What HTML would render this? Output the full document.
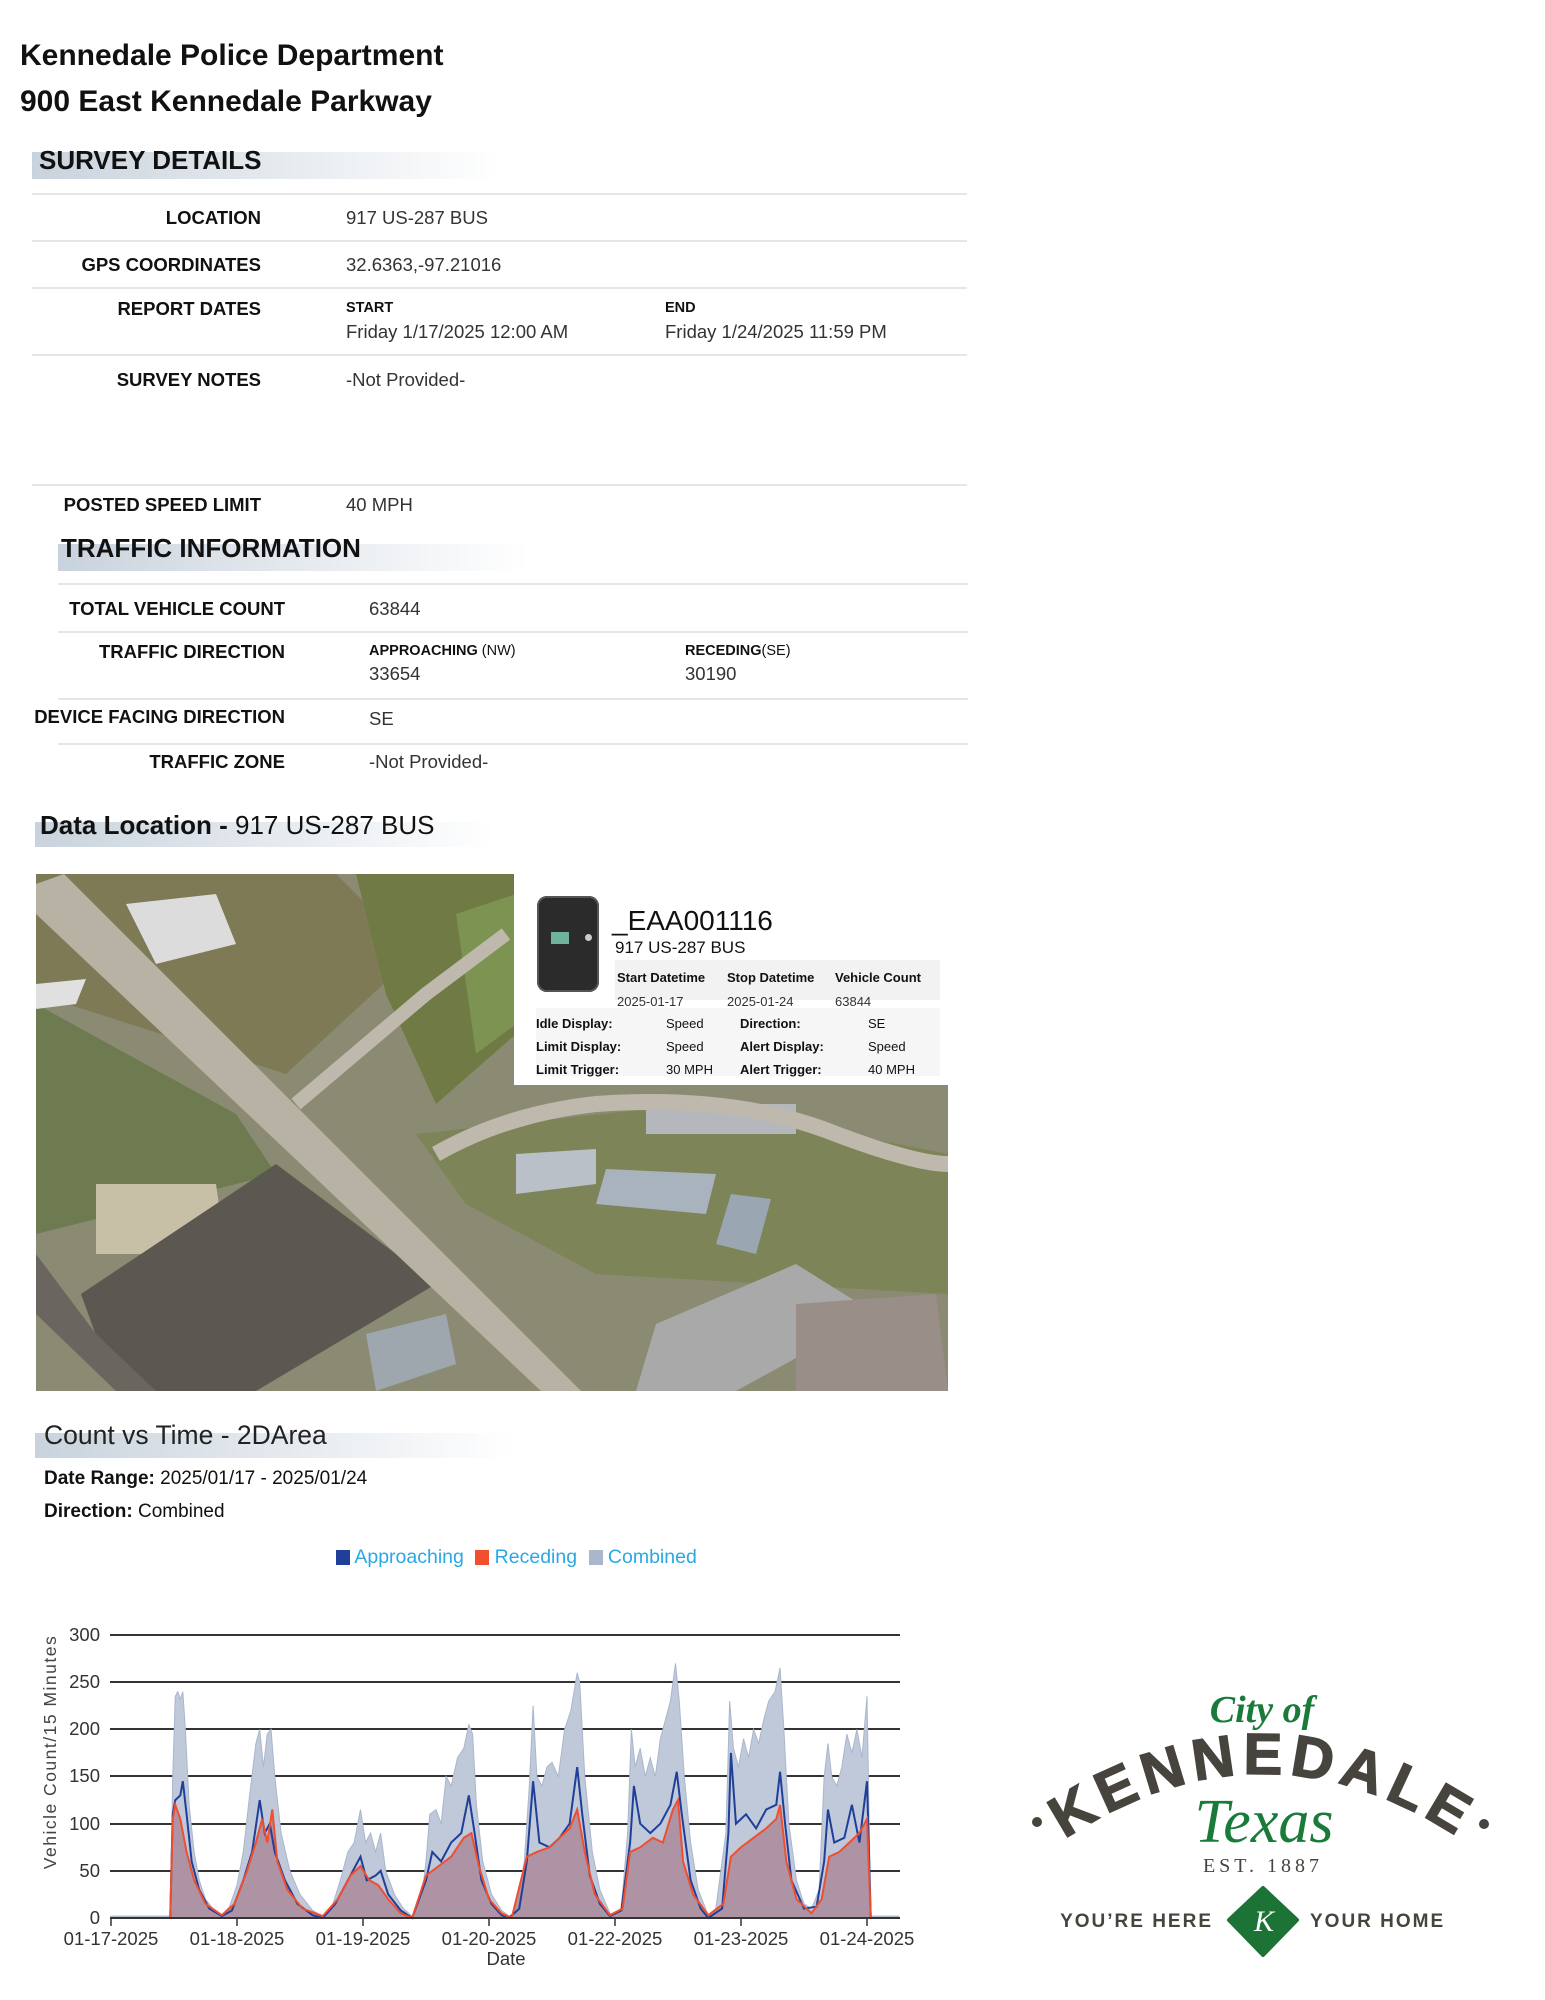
<!DOCTYPE html>
<html><head><meta charset="utf-8"><style>
*{margin:0;padding:0;box-sizing:border-box}
body{width:1545px;height:2000px;background:#fff;position:relative;overflow:hidden;font-family:"Liberation Sans",Arial,sans-serif;color:#111}
.t{position:absolute;white-space:nowrap;line-height:20px}
.h{font-size:30px;font-weight:bold;line-height:34px}
.lab{font-size:18.5px;font-weight:bold;color:#111;text-align:right}
.val{font-size:18.5px;color:#333}
.sm{font-size:14.5px;font-weight:bold;color:#111}
.hr{position:absolute;height:2px;background:#e6e6e6}
.band{position:absolute;background:linear-gradient(to right,#c9d3dd 0%,#e4e9ee 50%,#fff 100%)}
.sec{font-size:26px;font-weight:bold;line-height:28px}
.pp{font-size:13px;line-height:16px;color:#111}
</style></head><body>

<div class="t h" style="left:20px;top:39px">Kennedale Police Department</div>
<div class="t h" style="left:20px;top:85px">900 East Kennedale Parkway</div>

<div class="band" style="left:32px;top:152px;width:470px;height:27px"></div>
<div class="t sec" style="left:39px;top:146px">SURVEY DETAILS</div>

<div class="hr" style="left:32px;top:193px;width:935px"></div>
<div class="t lab" style="right:1284px;top:208px">LOCATION</div>
<div class="t val" style="left:346px;top:208px">917 US-287 BUS</div>
<div class="hr" style="left:32px;top:240px;width:935px"></div>
<div class="t lab" style="right:1284px;top:255px">GPS COORDINATES</div>
<div class="t val" style="left:346px;top:255px">32.6363,-97.21016</div>
<div class="hr" style="left:32px;top:287px;width:935px"></div>
<div class="t lab" style="right:1284px;top:299px">REPORT DATES</div>
<div class="t sm" style="left:346px;top:298px">START</div>
<div class="t val" style="left:346px;top:322px">Friday 1/17/2025 12:00 AM</div>
<div class="t sm" style="left:665px;top:298px">END</div>
<div class="t val" style="left:665px;top:322px">Friday 1/24/2025 11:59 PM</div>
<div class="hr" style="left:32px;top:354px;width:935px"></div>
<div class="t lab" style="right:1284px;top:370px">SURVEY NOTES</div>
<div class="t val" style="left:346px;top:370px">-Not Provided-</div>
<div class="hr" style="left:32px;top:484px;width:935px"></div>
<div class="t lab" style="right:1284px;top:495px">POSTED SPEED LIMIT</div>
<div class="t val" style="left:346px;top:495px">40 MPH</div>

<div class="band" style="left:58px;top:544px;width:470px;height:27px"></div>
<div class="t sec" style="left:61px;top:534px">TRAFFIC INFORMATION</div>

<div class="hr" style="left:58px;top:583px;width:910px"></div>
<div class="t lab" style="right:1260px;top:599px">TOTAL VEHICLE COUNT</div>
<div class="t val" style="left:369px;top:599px">63844</div>
<div class="hr" style="left:58px;top:631px;width:910px"></div>
<div class="t lab" style="right:1260px;top:642px">TRAFFIC DIRECTION</div>
<div class="t sm" style="left:369px;top:641px">APPROACHING <span style="font-weight:normal">(NW)</span></div>
<div class="t val" style="left:369px;top:664px">33654</div>
<div class="t sm" style="left:685px;top:641px">RECEDING<span style="font-weight:normal">(SE)</span></div>
<div class="t val" style="left:685px;top:664px">30190</div>
<div class="hr" style="left:58px;top:698px;width:910px"></div>
<div class="t lab" style="right:1260px;top:707px">DEVICE FACING DIRECTION</div>
<div class="t val" style="left:369px;top:709px">SE</div>
<div class="hr" style="left:58px;top:743px;width:910px"></div>
<div class="t lab" style="right:1260px;top:752px">TRAFFIC ZONE</div>
<div class="t val" style="left:369px;top:752px">-Not Provided-</div>

<div class="band" style="left:35px;top:822px;width:460px;height:25px"></div>
<div class="t" style="left:40px;top:810px;font-size:26px;line-height:30px"><b>Data Location - </b>917 US-287 BUS</div>

<!-- Map -->
<svg style="position:absolute;left:36px;top:874px" width="912" height="517" viewBox="0 0 912 517">
<rect width="912" height="517" fill="#8b8a73"/>
<polygon points="0,0 300,0 380,80 250,200 0,120" fill="#7d7a55"/>
<polygon points="320,0 480,0 480,160 400,230 350,120" fill="#6f7a45"/>
<polygon points="420,40 480,20 480,150 440,180" fill="#7c9352"/>
<polygon points="0,130 200,240 240,300 0,360" fill="#6e7a50"/>
<polygon points="60,310 180,310 190,380 60,380" fill="#c8bfa7"/>
<polygon points="45,420 240,290 400,410 220,517 80,517" fill="#5b5751"/>
<polygon points="380,260 660,230 912,280 912,420 560,400 430,330" fill="#7d8458"/>
<polygon points="480,280 560,275 560,310 480,320" fill="#b9c0c8"/>
<polygon points="570,295 680,300 670,340 560,330" fill="#a9b3be"/>
<polygon points="695,320 735,325 720,380 680,370" fill="#9aa6b2"/>
<polygon points="610,230 760,230 760,260 610,260" fill="#b4b7bb"/>
<polygon points="620,450 760,390 840,440 700,517 600,517" fill="#a9a9a9"/>
<polygon points="760,430 900,420 912,517 760,517" fill="#9a8e88"/>
<polygon points="0,380 60,460 120,517 80,517 0,440" fill="#6b6560"/>
<polygon points="90,30 180,20 200,70 120,90" fill="#dcdcdc"/>
<polygon points="0,110 50,105 40,130 0,135" fill="#e0e0e0"/>
<polygon points="330,460 410,440 420,490 340,517" fill="#9ea6ae"/>
<polygon points="0,10 28,0 545,517 505,517 0,40" fill="#b8b2a5"/>
<path d="M400,280 Q470,240 560,230 Q700,220 800,260 Q880,290 912,290" stroke="#bfb9ad" stroke-width="16" fill="none"/>
<path d="M260,230 L390,120 L470,60" stroke="#bfb9ad" stroke-width="14" fill="none"/>
</svg>
<!-- popup -->
<div style="position:absolute;left:514px;top:874px;width:434px;height:211px;background:#fff"></div>
<div style="position:absolute;left:537px;top:896px;width:62px;height:96px;background:#2b2b2b;border-radius:10px;box-shadow:0 0 0 2px #555 inset"></div>
<div style="position:absolute;left:551px;top:932px;width:18px;height:12px;background:#6fb39a"></div>
<div style="position:absolute;left:585px;top:934px;width:7px;height:7px;background:#ccc;border-radius:50%"></div>
<div class="t" style="left:612px;top:906px;font-size:28px;line-height:30px">_EAA001116</div>
<div class="t" style="left:615px;top:938px;font-size:17px">917 US-287 BUS</div>
<div style="position:absolute;left:615px;top:960px;width:325px;height:40px;background:#f2f2f2"></div>
<div class="t pp" style="left:617px;top:970px;font-weight:bold">Start Datetime</div>
<div class="t pp" style="left:727px;top:970px;font-weight:bold">Stop Datetime</div>
<div class="t pp" style="left:835px;top:970px;font-weight:bold">Vehicle Count</div>
<div class="t pp" style="left:617px;top:994px;color:#333">2025-01-17</div>
<div class="t pp" style="left:727px;top:994px;color:#333">2025-01-24</div>
<div class="t pp" style="left:835px;top:994px;color:#333">63844</div>
<div style="position:absolute;left:536px;top:1008px;width:404px;height:68px;background:#f6f6f6"></div>
<div class="t pp" style="left:536px;top:1016px;font-weight:bold">Idle Display:</div>
<div class="t pp" style="left:666px;top:1016px">Speed</div>
<div class="t pp" style="left:740px;top:1016px;font-weight:bold">Direction:</div>
<div class="t pp" style="left:868px;top:1016px">SE</div>
<div class="t pp" style="left:536px;top:1039px;font-weight:bold">Limit Display:</div>
<div class="t pp" style="left:666px;top:1039px">Speed</div>
<div class="t pp" style="left:740px;top:1039px;font-weight:bold">Alert Display:</div>
<div class="t pp" style="left:868px;top:1039px">Speed</div>
<div class="t pp" style="left:536px;top:1062px;font-weight:bold">Limit Trigger:</div>
<div class="t pp" style="left:666px;top:1062px">30 MPH</div>
<div class="t pp" style="left:740px;top:1062px;font-weight:bold">Alert Trigger:</div>
<div class="t pp" style="left:868px;top:1062px">40 MPH</div>

<div class="band" style="left:35px;top:1433px;width:480px;height:25px"></div>
<div class="t" style="left:44px;top:1420px;font-size:26.5px;line-height:30px;color:#222">Count vs Time - 2DArea</div>
<div class="t" style="left:44px;top:1469px;font-size:19px"><b>Date Range:</b> 2025/01/17 - 2025/01/24</div>
<div class="t" style="left:44px;top:1502px;font-size:19px"><b>Direction:</b> Combined</div>

<div class="t" style="left:336px;top:1547px;font-size:19.5px;color:#2aa8e4">
<span style="display:inline-block;width:14px;height:15px;background:#1f3f99;vertical-align:-2px"></span> Approaching
<span style="display:inline-block;width:14px;height:15px;background:#f04e2f;vertical-align:-2px;margin-left:6px"></span> Receding
<span style="display:inline-block;width:14px;height:15px;background:#aab6cc;vertical-align:-2px;margin-left:6px"></span> Combined</div>

<!-- chart -->
<svg style="position:absolute;left:0;top:1600px" width="960" height="380" viewBox="0 1600 960 380">
<g stroke="#333" stroke-width="2">
<line x1="110" y1="1635" x2="900" y2="1635"/>
<line x1="110" y1="1682" x2="900" y2="1682"/>
<line x1="110" y1="1729" x2="900" y2="1729"/>
<line x1="110" y1="1776" x2="900" y2="1776"/>
<line x1="110" y1="1824" x2="900" y2="1824"/>
<line x1="110" y1="1871" x2="900" y2="1871"/>
</g>
<g transform="translate(111,1918) scale(126,-0.9433)">
<path fill="#bfc9da" stroke="#aab6cc" stroke-width="1" vector-effect="non-scaling-stroke" d="M0,0 L0.47,0 L0.49,150 L0.51,235 L0.53,240 L0.55,232 L0.57,240 L0.59,200 L0.62,120 L0.66,70 L0.70,40 L0.75,20 L0.82,8 L0.88,3 L0.94,12 L1.0,35 L1.05,70 L1.1,130 L1.15,185 L1.18,200 L1.21,160 L1.24,195 L1.27,200 L1.30,150 L1.35,90 L1.42,50 L1.5,25 L1.6,8 L1.68,2 L1.75,10 L1.82,40 L1.88,70 L1.93,80 L1.98,115 L2.02,80 L2.06,90 L2.10,70 L2.14,90 L2.18,50 L2.25,25 L2.32,10 L2.39,2 L2.45,5 L2.5,60 L2.53,110 L2.58,115 L2.62,100 L2.66,150 L2.70,140 L2.75,170 L2.80,180 L2.84,205 L2.87,195 L2.9,120 L2.95,60 L3.02,25 L3.1,8 L3.16,2 L3.22,8 L3.28,60 L3.32,140 L3.35,225 L3.38,150 L3.42,140 L3.46,160 L3.5,165 L3.55,150 L3.6,200 L3.65,220 L3.70,260 L3.72,250 L3.76,150 L3.82,70 L3.88,30 L3.96,5 L4.0,2 L4.05,10 L4.1,90 L4.13,200 L4.16,160 L4.2,180 L4.24,150 L4.28,170 L4.32,150 L4.36,190 L4.40,210 L4.44,230 L4.48,270 L4.51,230 L4.55,150 L4.6,80 L4.66,30 L4.74,3 L4.8,10 L4.88,90 L4.91,230 L4.94,180 L4.98,160 L5.02,190 L5.06,170 L5.1,200 L5.14,185 L5.18,210 L5.22,230 L5.27,240 L5.31,265 L5.34,200 L5.38,100 L5.44,40 L5.5,15 L5.56,10 L5.62,30 L5.66,150 L5.69,185 L5.72,150 L5.76,140 L5.8,160 L5.84,195 L5.88,175 L5.92,200 L5.96,170 L6.0,235 L6.03,0 L6.25,0 L6.25,2 L0,2 Z"/>
<path fill="#ad93a3" d="M0.47,0 L0.49,105 L0.51,120 L0.55,105 L0.6,70 L0.66,40 L0.75,15 L0.88,3 L0.98,15 L1.08,50 L1.15,80 L1.2,105 L1.24,80 L1.28,115 L1.32,60 L1.4,30 L1.52,10 L1.68,2 L1.8,20 L1.9,45 L1.98,55 L2.05,40 L2.12,35 L2.2,20 L2.3,5 L2.39,0 L2.5,45 L2.6,55 L2.7,65 L2.8,85 L2.86,90 L2.92,55 L3.0,20 L3.1,5 L3.18,0 L3.3,65 L3.38,70 L3.48,75 L3.56,85 L3.64,95 L3.7,115 L3.76,70 L3.84,25 L3.96,3 L4.06,10 L4.12,70 L4.2,75 L4.3,85 L4.38,80 L4.46,115 L4.5,125 L4.54,60 L4.62,25 L4.74,3 L4.86,15 L4.92,65 L5.0,75 L5.1,85 L5.2,95 L5.28,105 L5.31,120 L5.36,60 L5.44,20 L5.56,5 L5.64,20 L5.7,65 L5.78,70 L5.86,80 L5.94,90 L6.0,105 L6.03,0 Z"/>
<path fill="none" stroke="#1f3f99" stroke-width="2" vector-effect="non-scaling-stroke" d="M0.47,0 L0.49,110 L0.51,125 L0.55,130 L0.57,145 L0.60,110 L0.64,60 L0.70,30 L0.78,10 L0.88,2 L0.96,8 L1.05,40 L1.12,70 L1.18,125 L1.22,90 L1.26,100 L1.30,70 L1.38,40 L1.48,15 L1.6,3 L1.68,0 L1.78,15 L1.88,40 L1.98,65 L2.03,40 L2.1,45 L2.14,50 L2.2,25 L2.3,8 L2.39,0 L2.5,40 L2.55,70 L2.62,60 L2.7,80 L2.78,90 L2.84,130 L2.88,95 L2.94,40 L3.02,15 L3.1,3 L3.16,0 L3.24,10 L3.3,60 L3.35,145 L3.4,80 L3.48,75 L3.56,85 L3.64,100 L3.7,160 L3.74,110 L3.8,45 L3.88,15 L3.96,2 L4.05,8 L4.12,80 L4.15,140 L4.2,100 L4.28,90 L4.36,100 L4.44,120 L4.49,155 L4.53,110 L4.6,40 L4.68,10 L4.74,0 L4.85,10 L4.9,90 L4.92,175 L4.96,100 L5.04,110 L5.12,95 L5.2,115 L5.28,120 L5.31,155 L5.35,100 L5.4,40 L5.5,10 L5.6,12 L5.66,60 L5.69,115 L5.74,80 L5.82,85 L5.88,120 L5.94,80 L6.0,145 L6.03,0"/>
<path fill="none" stroke="#f04e2f" stroke-width="2" vector-effect="non-scaling-stroke" d="M0.47,0 L0.49,105 L0.51,120 L0.55,105 L0.6,70 L0.66,40 L0.75,15 L0.88,3 L0.98,15 L1.08,50 L1.15,80 L1.2,105 L1.24,80 L1.28,115 L1.32,60 L1.4,30 L1.52,10 L1.68,2 L1.8,20 L1.9,45 L1.98,55 L2.05,40 L2.12,35 L2.2,20 L2.3,5 L2.39,0 L2.5,45 L2.6,55 L2.7,65 L2.8,85 L2.86,90 L2.92,55 L3.0,20 L3.1,5 L3.18,0 L3.3,65 L3.38,70 L3.48,75 L3.56,85 L3.64,95 L3.7,115 L3.76,70 L3.84,25 L3.96,3 L4.06,10 L4.12,70 L4.2,75 L4.3,85 L4.38,80 L4.46,115 L4.5,125 L4.54,60 L4.62,25 L4.74,3 L4.86,15 L4.92,65 L5.0,75 L5.1,85 L5.2,95 L5.28,105 L5.31,120 L5.36,60 L5.44,20 L5.56,5 L5.64,20 L5.7,65 L5.78,70 L5.86,80 L5.94,90 L6.0,105 L6.03,0"/>
</g>
<line x1="110" y1="1918" x2="900" y2="1918" stroke="#333" stroke-width="2"/>
<g stroke="#333" stroke-width="1.5">
<line x1="111" y1="1918" x2="111" y2="1926"/><line x1="237" y1="1918" x2="237" y2="1926"/><line x1="363" y1="1918" x2="363" y2="1926"/><line x1="489" y1="1918" x2="489" y2="1926"/><line x1="615" y1="1918" x2="615" y2="1926"/><line x1="741" y1="1918" x2="741" y2="1926"/><line x1="867" y1="1918" x2="867" y2="1926"/>
</g>
<g font-family="Liberation Sans, sans-serif" font-size="18.5" fill="#333" text-anchor="end">
<text x="100" y="1641">300</text><text x="100" y="1688">250</text><text x="100" y="1735">200</text><text x="100" y="1782">150</text><text x="100" y="1830">100</text><text x="100" y="1877">50</text><text x="100" y="1924">0</text>
</g>
<g font-family="Liberation Sans, sans-serif" font-size="18.5" fill="#333" text-anchor="middle">
<text x="111" y="1945">01-17-2025</text><text x="237" y="1945">01-18-2025</text><text x="363" y="1945">01-19-2025</text><text x="489" y="1945">01-20-2025</text><text x="615" y="1945">01-22-2025</text><text x="741" y="1945">01-23-2025</text><text x="867" y="1945">01-24-2025</text>
<text x="506" y="1965">Date</text>
</g>
<text transform="translate(56,1752) rotate(-90)" font-family="Liberation Sans, sans-serif" font-size="17.5" fill="#444" text-anchor="middle" letter-spacing="1.5">Vehicle Count/15 Minutes</text>
</svg>

<!-- logo -->
<svg style="position:absolute;left:1000px;top:1660px" width="545" height="300" viewBox="1000 1660 545 300">
<defs><path id="arc" d="M1052,1848 Q1262,1700 1474,1848"/></defs>
<text x="1262" y="1722" text-anchor="middle" font-family="Liberation Serif, serif" font-style="italic" font-weight="bold" font-size="38" fill="#1a7a3a">City of</text>
<text font-family="Liberation Sans, sans-serif" font-weight="bold" font-size="58" fill="#47443e" letter-spacing="7" stroke="#47443e" stroke-width="1.5"><textPath href="#arc" startOffset="50%" text-anchor="middle">KENNEDALE</textPath></text>
<circle cx="1037" cy="1822" r="5" fill="#47443e"/><circle cx="1484" cy="1824" r="5" fill="#47443e"/>
<text x="1264" y="1842" text-anchor="middle" font-family="Liberation Serif, serif" font-style="italic" font-size="62" fill="#1a7a3a">Texas</text>
<text x="1263" y="1872" text-anchor="middle" font-family="Liberation Serif, serif" font-size="20" fill="#47443e" letter-spacing="4">EST. 1887</text>
<text x="1213" y="1927" text-anchor="end" font-family="Liberation Sans, sans-serif" font-weight="bold" font-size="19" fill="#47443e" letter-spacing="2">YOU’RE HERE</text>
<text x="1310" y="1927" font-family="Liberation Sans, sans-serif" font-weight="bold" font-size="19" fill="#47443e" letter-spacing="2">YOUR HOME</text>
<polygon points="1263,1888 1297,1920 1263,1955 1229,1920" fill="#1c7335" stroke="#1c7335" stroke-width="4" stroke-linejoin="round"/>
<text x="1264" y="1931" text-anchor="middle" font-family="Liberation Serif, serif" font-style="italic" font-size="30" fill="#fff">K</text>
</svg>
</body></html>
